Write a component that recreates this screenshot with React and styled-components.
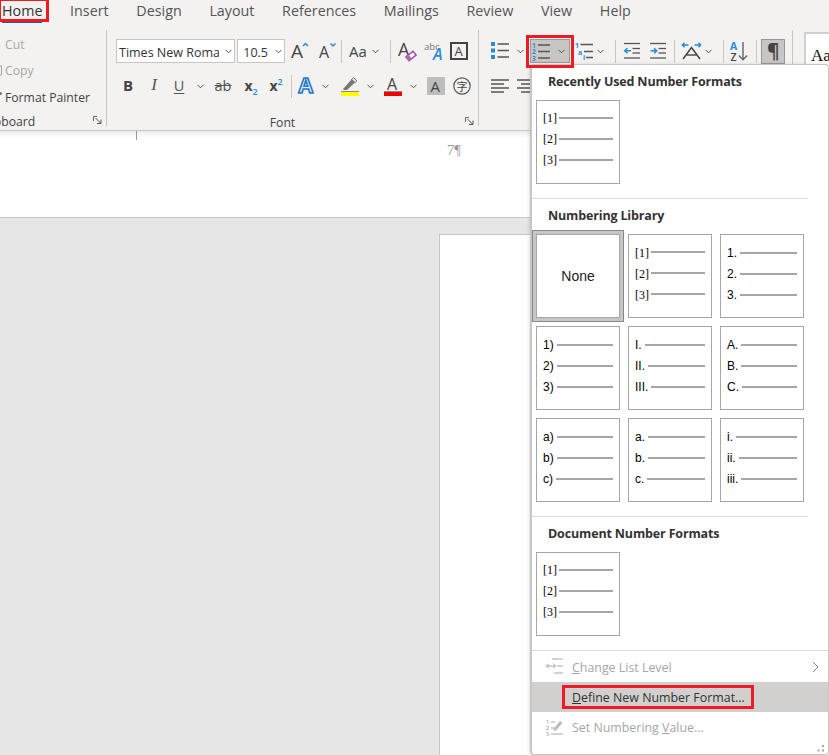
import React from "react";
import styled, { createGlobalStyle } from "styled-components";

const Global = createGlobalStyle`
  html, body { margin: 0; padding: 0; background: #e6e6e6; }
  * { box-sizing: border-box; }
  body { font-family: "Open Sans", "Noto Sans", sans-serif; }
`;

const DARK = "#444";
const BLUE = "#2b8ad6";

const Page = styled.div`
  position: relative; width: 829px; height: 755px; overflow: hidden;
  display: flex; flex-direction: column; background: #e6e6e6;
`;
const TabBar = styled.nav`
  display: flex; height: 22px; background: #f3f2f1; padding-left: 2px; gap: 27.7px; flex: none;
`;
const Tab = styled.div`
  position: relative; height: 22px; line-height: 21px; font-size: 14.3px;
  color: ${p => (p.$active ? "#333" : "#555")};
  ${p => p.$active && `box-shadow: 0 1px 0 #2b579a;`}
`;
const RedBox = styled.span`
  position: absolute; z-index: 5; pointer-events: none; border: 3px solid #ed1c24;
  top: ${p => p.$t}px; bottom: ${p => p.$b}px; left: ${p => p.$l}px; right: ${p => p.$r}px;
`;
const Ribbon = styled.section`
  display: flex; flex: none; height: 109px; padding-top: 8px; background: #f3f2f1;
  border-bottom: 1px solid #c8c6c4; overflow: hidden;
`;
const Group = styled.div`
  flex: none; width: ${p => p.$w}px; height: 100px; display: flex; flex-direction: column;
  padding-left: ${p => p.$pad || 0}px;
`;
const GroupSep = styled.div`
  flex: none; width: 1px; height: 96px; background: #c8c6c4;
`;
const Row = styled.div`
  display: flex; align-items: center; height: 24px; margin-top: ${p => p.$mt}px;
`;
const Tool = styled.span`
  flex: none; display: inline-flex; align-items: center; justify-content: center;
  width: ${p => p.$w}px; margin-left: ${p => p.$ml || 0}px; color: ${DARK};
`;
const RowSep = styled.span`
  flex: none; width: 1px; height: 23px; background: #c8c6c4; margin-left: ${p => p.$ml}px;
`;
const Select = styled.div`
  flex: none; width: ${p => p.$w}px; margin-left: ${p => p.$ml || 0}px; height: 24px; background: #fff;
  border: 1px solid #c8c6c4; display: flex; align-items: center; padding: 0 2px;
  font-size: 12.5px; color: #333; overflow: hidden;
`;
const SelectText = styled.span`
  flex: 1; min-width: 0; overflow: hidden; white-space: nowrap; padding-top: 2px;
`;
const Bold = styled.span`font-weight: 700; font-size: 15px; color: #444; margin-bottom: 2px;`;
const Pilcrow = styled.span`font-weight: 700; font-size: 19px; line-height: 22px; color: #444; margin-left: 1px;`;
const Ital = styled.span`font-family: "Liberation Serif", serif; font-style: italic; font-size: 17px; color: #555; margin-bottom: 2px;`;
const Under = styled.span`font-size: 14.5px; color: #555; text-decoration: underline; text-underline-offset: 2px; margin-bottom: 2px;`;
const Strike = styled.span`font-size: 14.5px; color: #555; text-decoration: line-through; margin-bottom: 2px;`;
const XText = styled.span`font-size: 14px; font-weight: 700; color: #444; margin-bottom: 2px;`;
const SubS = styled.sub`font-size: 9px; color: ${BLUE}; font-weight: 600; line-height: 0;`;
const SupS = styled.sup`font-size: 9px; color: ${BLUE}; font-weight: 600; line-height: 0;`;
const GroupFoot = styled.div`
  display: flex; align-items: center; height: 16px; margin-top: ${p => p.$mt}px;
  padding-right: 4px; overflow: hidden;
`;
const FootLabel = styled.span`
  flex: 1; text-align: center; font-size: 12.2px; color: #444; white-space: nowrap; padding-right: 10px;
`;
const ClipFootLabel = styled.span`
  flex: 1; margin-left: -20px; font-size: 12.2px; color: #444; white-space: nowrap;
`;
const LauncherSlot = styled.span`flex: none; margin-left: 6px; display: flex; margin-top: -2px;`;
const ClipRow = styled.div`
  display: flex; align-items: center; height: 26.5px; font-size: 12.2px; white-space: nowrap; padding-top: 2px;
  color: ${p => (p.$off ? "#a6a6a6" : "#444")};
`;
const ClipIcon = styled.span`flex: none; width: 5px; display: flex;`;
const ToggleBtn = styled.span`
  position: relative; flex: none; display: inline-flex; align-items: center;
  width: ${p => p.$w}px; height: ${p => p.$h}px; margin-left: ${p => p.$ml}px;
  background: #c8c6c4; border: 1px solid #9a9896; padding-left: ${p => p.$pad}px;
`;
const StylesBox = styled.div`
  flex: none; margin: 2px 0 0 11px; width: 40px; height: 60px; background: #fff;
  border: 2px solid #d2d0ce; border-right: none; padding: 12px 0 0 5px;
  font-family: "Liberation Serif", serif; font-size: 17px; color: #111;
`;
const Shadow = styled.div`
  flex: none; height: 87px; background: linear-gradient(#ececec 0, #fff 7px);
  border-bottom: 1px solid #c8c8c8; display: flex; align-items: flex-start;
`;
const Tick = styled.span`flex: none; width: 1px; height: 9px; margin-left: 136px; background: #999;`;
const HeaderMark = styled.span`
  flex: none; margin: 11px 0 0 310px; font-family: "Liberation Serif", serif; font-size: 14.5px; color: #9a9a9a;
`;
const Canvas = styled.div`
  flex: 1; min-height: 0; padding: 16px 0 0 439px; background: #e6e6e6;
`;
const DocPage = styled.div`
  height: 100%; background: #fff; border: 1px solid #c6c6c6; border-bottom: none; border-right: none;
`;
const Menu = styled.div`
  position: absolute; z-index: 3; left: 530px; top: 64px; width: 299px; height: 691px;
  background: #fff; border: 1px solid #c8c6c4; border-left-width: 2px; border-radius: 4px;
  padding-top: 7px; box-shadow: 0 1px 4px rgba(0,0,0,.18); display: flex; flex-direction: column;
`;
const Heading = styled.div`
  height: 18px; line-height: 20px; padding-left: 16px; margin-bottom: 10px;
  font-size: 12.5px; font-weight: 700; color: #333; white-space: nowrap; letter-spacing: -0.15px;
`;
const TileGrid = styled.div`
  display: grid; grid-template-columns: repeat(3, 84px); grid-auto-rows: 84px; gap: 8px; padding-left: 4px;
`;
const Tile = styled.div`
  border: 1px solid #a6a6a6; background: #fff; padding: ${p => p.$top}px 6px 0;
  ${p => p.$selected && `
    box-shadow: 0 0 0 3px #c8c6c4, 0 0 0 4px #8a8886;
    display: flex; align-items: center; justify-content: center; padding: 0;
    font-family: "Liberation Sans", sans-serif; font-size: 14px; color: #222;
  `}
`;
const ListRow = styled.div`
  display: flex; align-items: center; height: 21px; gap: ${p => (p.$serif ? 2 : 3)}px;
  font-family: ${p => (p.$serif ? '"Liberation Serif", serif' : '"Liberation Sans", sans-serif')};
  font-size: 12px; color: #000;
`;
const ListMark = styled.span`flex: none; padding-top: ${p => (p.$serif ? 2 : 0)}px;`;
const ListLine = styled.span`flex: 1; height: 2px; background: #a6a6a6;`;
const Divider = styled.div`
  flex: none; height: 1px; background: #dcdcdc; width: ${p => p.$w}px;
  margin-top: ${p => p.$mt}px; margin-bottom: ${p => p.$mb}px;
`;
const Item = styled.div`
  flex: none; position: relative; display: flex; align-items: center; height: ${p => p.$h || 30}px; padding-left: 40px;
  font-size: 12.4px; white-space: nowrap;
  background: ${p => (p.$hot ? "#d2d0ce" : "transparent")};
  color: ${p => (p.$off ? "#a6a6a6" : "#333")};
`;
const ItemIcon = styled.span`position: absolute; left: 14px; top: 6px; display: flex;`;
const ItemArrow = styled.span`margin-left: auto; margin-right: 9px; display: flex;`;
const Grip = styled.span`margin: 3px 3px 0 auto; display: flex;`;

const Svg = styled.svg`display: block; overflow: visible;`;

const Chev = ({ ml = 0 }) => (
  <Tool $w={7} $ml={ml}>
    <Svg width="7" height="5" viewBox="0 0 7 5"><polyline points="0.5,0.8 3.5,3.8 6.5,0.8" fill="none" stroke="#555" strokeWidth="1" /></Svg>
  </Tool>
);
const Launcher = () => (
  <Svg width="9" height="8" viewBox="0 0 9 8">
    <polyline points="0.5,5 0.5,0.5 4,0.5" fill="none" stroke="#666" />
    <path d="M2.5 2 L7.5 7 M8 3.5 V7.5 H4" fill="none" stroke="#555" />
  </Svg>
);
const T = ({ x, y, s, c = DARK, w = 400, i, f = "Open Sans", children, ...r }) => (
  <text x={x} y={y} fontSize={s} fill={c} fontWeight={w} fontStyle={i ? "italic" : "normal"} fontFamily={`"${f}", sans-serif`} {...r}>{children}</text>
);
const L = ({ x1, y, x2, c = "#555", w = 1.5 }) => <line x1={x1} y1={y} x2={x2} y2={y} stroke={c} strokeWidth={w} />;

const Grow = () => (
  <Svg width="18" height="18" viewBox="0 0 18 18">
    <T x="0" y="16" s="19">A</T>
    <polyline points="12,4 14.5,1.5 17,4" fill="none" stroke={BLUE} strokeWidth="1.5" />
  </Svg>
);
const Shrink = () => (
  <Svg width="18" height="18" viewBox="0 0 18 18">
    <T x="0" y="16" s="16">A</T>
    <polyline points="11.5,1.5 14,4 16.5,1.5" fill="none" stroke={BLUE} strokeWidth="1.5" />
  </Svg>
);
const Eraser = () => (
  <Svg width="18" height="18" viewBox="0 0 18 18">
    <T x="0" y="14" s="18">A</T>
    <rect x="8.5" y="11.5" width="9" height="5" transform="rotate(-38 13 14)" fill="#fff" stroke="#a349a4" strokeWidth="1.5" />
    <rect x="8.5" y="11.5" width="3.5" height="5" transform="rotate(-38 13 14)" fill="#b566b5" />
  </Svg>
);
const AbcA = () => (
  <Svg width="19" height="18" viewBox="0 0 19 18">
    <T x="0" y="8" s="9.5" c="#777">abc</T>
    <T x="9" y="18" s="16" c={BLUE} i w={600}>A</T>
  </Svg>
);
const BoxA = () => (
  <Svg width="18" height="18" viewBox="0 0 18 18">
    <rect x="1" y="1" width="16" height="16" fill="none" stroke="#444" strokeWidth="2" />
    <T x="4.5" y="14" s="13">A</T>
  </Svg>
);
const EffectA = () => (
  <Svg width="18" height="18" viewBox="0 0 18 18">
    <T x="-0.5" y="16" s="21" w={700} c="#e8f2fb" stroke="#1f78c8" strokeWidth="1.6">A</T>
  </Svg>
);
const Highlight = () => (
  <Svg width="18" height="19" viewBox="0 0 18 19">
    <path d="M2.5 11.5 L10.5 2.5 L14 5.5 L6 13 L2.5 13 Z" fill="#777" />
    <path d="M10.5 2.5 L12.5 0.8 L15.8 3.8 L14 5.5 Z" fill="none" stroke="#666" />
    <L x1="0" y={14.5} x2="18" c="#888" w={1} />
    <rect x="0" y="15" width="18" height="4" fill="#ffff00" />
  </Svg>
);
const ColorA = () => (
  <Svg width="18" height="19" viewBox="0 0 18 19">
    <T x="3" y="13" s="16">A</T>
    <L x1="0" y={14.5} x2="18" c="#888" w={1} />
    <rect x="0" y="15" width="18" height="4" fill="#f00000" />
  </Svg>
);
const ShadedA = () => (
  <Svg width="18" height="18" viewBox="0 0 18 18">
    <rect width="18" height="18" fill="#bdbdbd" />
    <T x="3.5" y="15" s="15" c="#444">A</T>
  </Svg>
);
const Enclosed = () => (
  <Svg width="18" height="18" viewBox="0 0 18 18">
    <circle cx="9" cy="9" r="8.2" fill="none" stroke="#555" strokeWidth="1.2" />
    <T x="3.5" y="13.5" s="11" f="Noto Sans CJK SC">字</T>
  </Svg>
);
const Bullets = () => (
  <Svg width="18" height="18" viewBox="0 0 18 18">
    {[0, 6.5, 13].map(y => <rect key={y} x="0" y={y} width="4" height="4" fill={BLUE} />)}
    {[2, 8.5, 15].map(y => <L key={y} x1="6.5" y={y} x2="18" />)}
  </Svg>
);
const Numbering = () => (
  <Svg width="18" height="19" viewBox="0 0 18 19">
    {["1", "2", "3"].map((n, i) => <T key={n} x="0" y={5.5 + i * 6.8} s="6.5" w={700} c={BLUE}>{n}</T>)}
    {[3, 9.5, 16].map(y => <L key={y} x1="6" y={y} x2="18" />)}
  </Svg>
);
const Multi = () => (
  <Svg width="18" height="18" viewBox="0 0 18 18">
    <T x="0" y="6" s="7" w={700} c={BLUE}>1</T>
    <T x="3" y="12.5" s="7" w={700} c={BLUE}>a</T>
    <T x="8" y="18" s="7" w={700} c={BLUE}>i</T>
    <L x1="5.5" y={2.5} x2="18" />
    <L x1="9" y={9.5} x2="18" />
    <L x1="11" y={15.5} x2="18" />
  </Svg>
);
const Indent = ({ flip }) => (
  <Svg width="16" height="18" viewBox="0 0 16 18">
    <L x1="0" y={1.5} x2="16" w={1.3} />
    <L x1="8.5" y={6.5} x2="16" w={1.3} />
    <L x1="8.5" y={11} x2="16" w={1.3} />
    <L x1="0" y={16} x2="16" w={1.3} />
    {flip
      ? <path d="M0.5 8.8 H6.5 M4 6.3 L6.8 8.8 L4 11.3" fill="none" stroke={BLUE} strokeWidth="1.5" />
      : <path d="M7 8.8 H1 M3.5 6.3 L0.7 8.8 L3.5 11.3" fill="none" stroke={BLUE} strokeWidth="1.5" />}
  </Svg>
);
const Spread = () => (
  <Svg width="19" height="18" viewBox="0 0 19 18">
    <path d="M0.5 3 H6.5 M2.5 0.8 L0.3 3 L2.5 5.2" fill="none" stroke={BLUE} strokeWidth="1.4" />
    <path d="M18.5 3 H12.5 M16.5 0.8 L18.7 3 L16.5 5.2" fill="none" stroke={BLUE} strokeWidth="1.4" />
    <polyline points="1,17 9.5,5.5 18,17" fill="none" stroke="#444" strokeWidth="1.5" />
    <L x1="4.5" y={13} x2="14.5" c="#444" w={1.4} />
  </Svg>
);
const Sort = () => (
  <Svg width="18" height="20" viewBox="0 0 18 20">
    <T x="0" y="9" s="10.5" w={700} c={BLUE}>A</T>
    <T x="0.5" y="19.5" s="10.5" w={600} c="#444">Z</T>
    <path d="M13 1 V18.5 M8.8 14.5 L13 18.7 L17.2 14.5" fill="none" stroke="#666" strokeWidth="1.4" />
  </Svg>
);
const Align = ({ w = 18, center }) => (
  <Svg width={w} height="15" viewBox={`0 0 ${w} 15`}>
    <L x1="0" y={1} x2={w} />
    <L x1={center ? 4 : 0} y={5} x2={center ? w - 4 : w - 5} />
    <L x1="0" y={9} x2={w} />
    <L x1={center ? 4 : 0} y={13} x2={center ? w - 4 : w - 5} />
  </Svg>
);
const LevelIcon = () => (
  <Svg width="17" height="16" viewBox="0 0 17 16">
    <L x1="6" y={1} x2="17" c="#a6a6a6" w={1} />
    <L x1="8" y={15} x2="17" c="#a6a6a6" w={1} />
    <L x1="11" y={8} x2="17" c="#a6a6a6" w={1} />
    <path d="M0.5 8 H9.5 M2.8 5.7 L0.5 8 L2.8 10.3 M7.2 5.7 L9.5 8 L7.2 10.3" fill="none" stroke="#a6a6a6" />
  </Svg>
);
const SetValueIcon = () => (
  <Svg width="17" height="19" viewBox="0 0 17 19">
    {["1", "2", "3"].map((n, i) => <T key={n} x="0" y={5.5 + i * 6.2} s="5.5" w={600} c="#a6a6a6">{n}</T>)}
    <L x1="5" y={4} x2="9" c="#a6a6a6" w={1} />
    <L x1="5" y={10} x2="9" c="#a6a6a6" w={1} />
    <L x1="5" y={16} x2="17" c="#a6a6a6" w={1} />
    <path d="M7.5 11 L14 3 L16.5 5 L10 12.5 L7.5 12.5 Z" fill="#bdbdbd" />
  </Svg>
);

const ListTile = ({ top, serif, marks }) => (
  <Tile $top={top}>
    {marks.map(m => (
      <ListRow key={m} $serif={serif}><ListMark $serif={serif}>{m}</ListMark><ListLine /></ListRow>
    ))}
  </Tile>
);
const BRACKETS = ["[1]", "[2]", "[3]"];

export default function App() {
  return (
    <Page>
      <Global />
      <TabBar>
        <Tab $active>Home<RedBox $t={-2} $b={0} $l={-4} $r={-7} /></Tab>
        <Tab>Insert</Tab><Tab>Design</Tab><Tab>Layout</Tab><Tab>References</Tab>
        <Tab>Mailings</Tab><Tab>Review</Tab><Tab>View</Tab><Tab>Help</Tab>
      </TabBar>
      <Ribbon>
        <Group $w={106}>
          <ClipRow $off><ClipIcon />Cut</ClipRow>
          <ClipRow $off>
            <ClipIcon><Svg width="5" height="11" viewBox="0 0 5 11"><rect x="-6" y="1" width="7.5" height="9" fill="none" stroke="#a6a6a6" /></Svg></ClipIcon>
            Copy
          </ClipRow>
          <ClipRow>
            <ClipIcon><Svg width="5" height="11" viewBox="0 0 5 11"><circle cx="0.5" cy="1.5" r="1.5" fill="#777" /></Svg></ClipIcon>
            Format Painter
          </ClipRow>
          <GroupFoot $mt={3.5}>
            <ClipFootLabel>Clipboard</ClipFootLabel>
            <LauncherSlot><Launcher /></LauncherSlot>
          </GroupFoot>
        </Group>
        <GroupSep />
        <Group $w={371} $pad={9}>
          <Row $mt={9}>
            <Select $w={119}><SelectText>Times New Roman</SelectText><Chev ml={6} /></Select>
            <Select $w={48} $ml={2}><SelectText>&nbsp;10.5</SelectText><Chev /></Select>
            <Tool $w={18} $ml={6}><Grow /></Tool>
            <Tool $w={18} $ml={10}><Shrink /></Tool>
            <RowSep $ml={4} />
            <Tool $w={18} $ml={7}><Svg width="18" height="14" viewBox="0 0 18 14"><T x="0" y="13" s="15">Aa</T></Svg></Tool>
            <Chev ml={5} />
            <RowSep $ml={11} />
            <Tool $w={18} $ml={7}><Eraser /></Tool>
            <Tool $w={19} $ml={8}><AbcA /></Tool>
            <Tool $w={18} $ml={7}><BoxA /></Tool>
          </Row>
          <Row $mt={11}>
            <Tool $w={24}><Bold>B</Bold></Tool>
            <Tool $w={24} $ml={2}><Ital>I</Ital></Tool>
            <Tool $w={24} $ml={1}><Under>U</Under></Tool>
            <Chev ml={6} />
            <Tool $w={18} $ml={10}><Strike>ab</Strike></Tool>
            <Tool $w={24} $ml={7}><XText>x<SubS>2</SubS></XText></Tool>
            <Tool $w={24} $ml={1}><XText>x<SupS>2</SupS></XText></Tool>
            <RowSep $ml={3} />
            <Tool $w={18} $ml={7}><EffectA /></Tool>
            <Chev ml={5} />
            <Tool $w={18} $ml={12}><Highlight /></Tool>
            <Chev ml={8} />
            <Tool $w={18} $ml={10}><ColorA /></Tool>
            <Chev ml={8} />
            <Tool $w={18} $ml={10}><ShadedA /></Tool>
            <Tool $w={18} $ml={8}><Enclosed /></Tool>
          </Row>
          <GroupFoot $mt={16}>
            <FootLabel>Font</FootLabel>
            <LauncherSlot><Launcher /></LauncherSlot>
          </GroupFoot>
        </Group>
        <GroupSep />
        <Group $w={313} $pad={12}>
          <Row $mt={9}>
            <Tool $w={18}><Bullets /></Tool>
            <Chev ml={8} />
            <ToggleBtn $w={40} $h={24} $ml={6} $pad={1}>
              <Numbering />
              <Chev ml={8} />
              <RedBox $t={-5} $b={-6} $l={-5} $r={-5} />
            </ToggleBtn>
            <Tool $w={18} $ml={5}><Multi /></Tool>
            <Chev ml={4} />
            <RowSep $ml={11} />
            <Tool $w={16} $ml={8}><Indent /></Tool>
            <Tool $w={16} $ml={10}><Indent flip /></Tool>
            <RowSep $ml={8} />
            <Tool $w={19} $ml={7}><Spread /></Tool>
            <Chev ml={4} />
            <RowSep $ml={11} />
            <Tool $w={18} $ml={6}><Sort /></Tool>
            <RowSep $ml={8} />
            <ToggleBtn $w={24} $h={25} $ml={4} $pad={4}><Pilcrow>¶</Pilcrow></ToggleBtn>
          </Row>
          <Row $mt={11}>
            <Tool $w={18}><Align /></Tool>
            <Tool $w={18} $ml={8}><Align center /></Tool>
          </Row>
        </Group>
        <GroupSep />
        <StylesBox>Aa</StylesBox>
      </Ribbon>
      <Shadow><Tick /><HeaderMark>7¶</HeaderMark></Shadow>
      <Canvas><DocPage /></Canvas>
      <Menu>
        <Heading>Recently Used Number Formats</Heading>
        <TileGrid><ListTile top={6} serif marks={BRACKETS} /></TileGrid>
        <Divider $w={276} $mt={14} $mb={7} />
        <Heading>Numbering Library</Heading>
        <TileGrid>
          <Tile $selected>None</Tile>
          <ListTile top={6.5} serif marks={BRACKETS} />
          <ListTile top={7} marks={["1.", "2.", "3."]} />
          <ListTile top={7} marks={["1)", "2)", "3)"]} />
          <ListTile top={7} marks={["I.", "II.", "III."]} />
          <ListTile top={7} marks={["A.", "B.", "C."]} />
          <ListTile top={7} marks={["a)", "b)", "c)"]} />
          <ListTile top={7} marks={["a.", "b.", "c."]} />
          <ListTile top={7} marks={["i.", "ii.", "iii."]} />
        </TileGrid>
        <Divider $w={276} $mt={14} $mb={7} />
        <Heading>Document Number Formats</Heading>
        <TileGrid><ListTile top={6} serif marks={BRACKETS} /></TileGrid>
        <Divider $w={296} $mt={14} $mb={1} />
        <Item $off>
          <ItemIcon><LevelIcon /></ItemIcon>
          <span><u>C</u>hange List Level</span>
          <ItemArrow><Svg width="7" height="12" viewBox="0 0 7 12"><polyline points="1,1 6,6 1,11" fill="none" stroke="#8a8886" /></Svg></ItemArrow>
        </Item>
        <Item $hot>
          <span><u>D</u>efine New Number Format...</span>
          <RedBox $t={3} $b={3} $l={30} $r={74} />
        </Item>
        <Item $off>
          <ItemIcon><SetValueIcon /></ItemIcon>
          <span>Set Numbering <u>V</u>alue...</span>
        </Item>
        <Grip>
          <Svg width="9" height="7" viewBox="0 0 9 7">
            <rect x="6" y="0" width="2" height="2" fill="#a6a6a6" />
            <rect x="1.5" y="4.5" width="2" height="2" fill="#a6a6a6" />
            <rect x="6" y="4.5" width="2" height="2" fill="#a6a6a6" />
          </Svg>
        </Grip>
      </Menu>
    </Page>
  );
}
